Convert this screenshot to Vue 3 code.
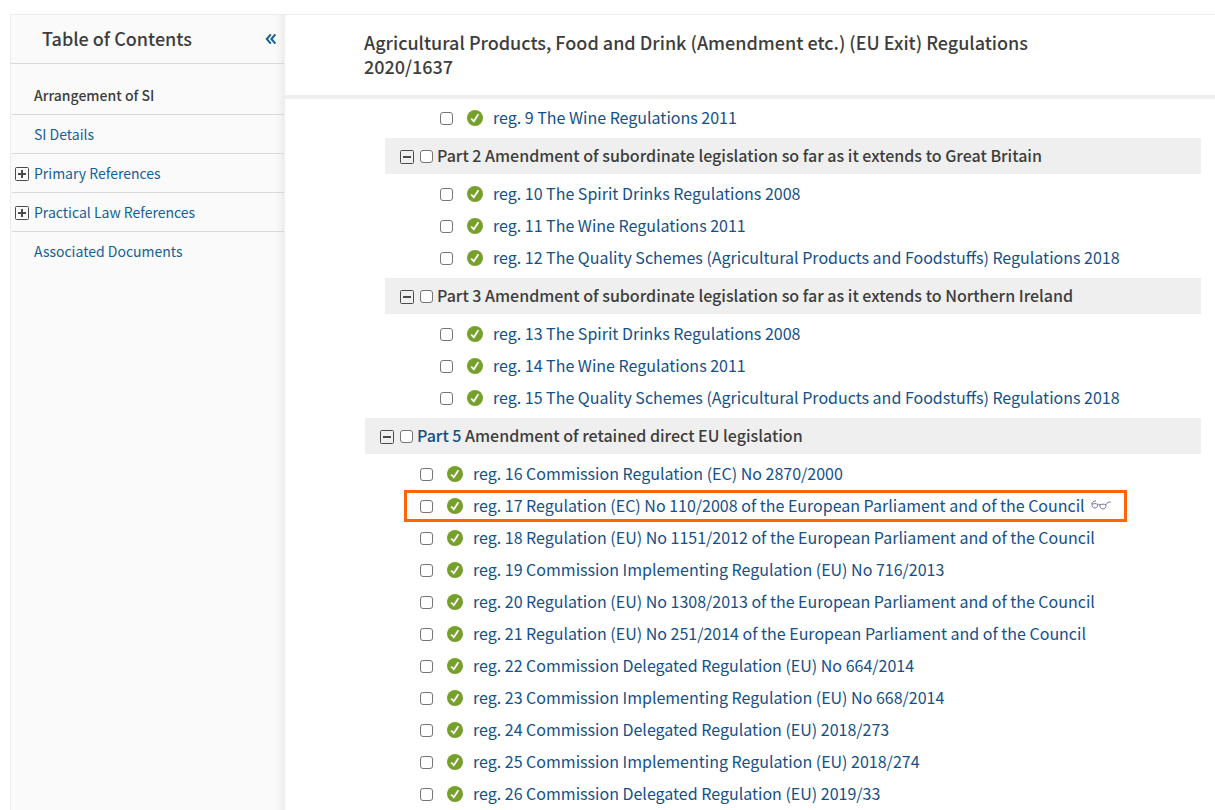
<script setup>
import { ref } from 'vue'

const nav = [
  { label: 'Arrangement of SI', current: true },
  { label: 'SI Details' },
  { label: 'Primary References', expandable: true },
  { label: 'Practical Law References', expandable: true },
  { label: 'Associated Documents' },
]

const sections = ref([
  {
    id: 'part1',
    nested: true,
    items: ['reg. 9 The Wine Regulations 2011'],
  },
  {
    id: 'part2',
    nested: true,
    part: 'Part 2',
    title: 'Amendment of subordinate legislation so far as it extends to Great Britain',
    items: [
      'reg. 10 The Spirit Drinks Regulations 2008',
      'reg. 11 The Wine Regulations 2011',
      'reg. 12 The Quality Schemes (Agricultural Products and Foodstuffs) Regulations 2018',
    ],
  },
  {
    id: 'part3',
    nested: true,
    part: 'Part 3',
    title: 'Amendment of subordinate legislation so far as it extends to Northern Ireland',
    items: [
      'reg. 13 The Spirit Drinks Regulations 2008',
      'reg. 14 The Wine Regulations 2011',
      'reg. 15 The Quality Schemes (Agricultural Products and Foodstuffs) Regulations 2018',
    ],
  },
  {
    id: 'part5',
    part: 'Part 5',
    linked: true,
    title: 'Amendment of retained direct EU legislation',
    viewed: 1,
    items: [
      'reg. 16 Commission Regulation (EC) No 2870/2000',
      'reg. 17 Regulation (EC) No 110/2008 of the European Parliament and of the Council',
      'reg. 18 Regulation (EU) No 1151/2012 of the European Parliament and of the Council',
      'reg. 19 Commission Implementing Regulation (EU) No 716/2013',
      'reg. 20 Regulation (EU) No 1308/2013 of the European Parliament and of the Council',
      'reg. 21 Regulation (EU) No 251/2014 of the European Parliament and of the Council',
      'reg. 22 Commission Delegated Regulation (EU) No 664/2014',
      'reg. 23 Commission Implementing Regulation (EU) No 668/2014',
      'reg. 24 Commission Delegated Regulation (EU) 2018/273',
      'reg. 25 Commission Implementing Regulation (EU) 2018/274',
      'reg. 26 Commission Delegated Regulation (EU) 2019/33',
    ],
  },
])
</script>

<template>
  <div class="page">
    <aside class="sidebar">
      <div class="sidebar-head">
        <h2>Table of Contents</h2>
        <button type="button" class="collapse" aria-label="Collapse table of contents">
          <svg width="12" height="12" viewBox="0 0 12 12" fill="none" stroke="currentColor" stroke-width="2">
            <path d="M5.8 1.4 1.800 6l4 4.600M10.400 1.400 6.400 6l4 4.600" />
          </svg>
        </button>
      </div>
      <ul class="nav">
        <li v-for="entry in nav" :key="entry.label">
          <button v-if="entry.expandable" type="button" class="toggle" :aria-label="`Expand ${entry.label}`">
            <svg width="14" height="14" viewBox="0 0 14 14" fill="none" stroke="currentColor">
              <rect x=".5" y=".5" width="13" height="13" rx="1" />
              <path d="M3 7h8M7 3v8" stroke-width="2" />
            </svg>
          </button>
          <span v-else class="toggle"></span>
          <strong v-if="entry.current">{{ entry.label }}</strong>
          <a v-else href="#">{{ entry.label }}</a>
        </li>
      </ul>
    </aside>

    <main class="content">
      <header class="title">
        <h1>Agricultural Products, Food and Drink (Amendment etc.) (EU Exit) Regulations 2020/1637</h1>
      </header>
      <div class="tree">
        <section v-for="section in sections" :key="section.id" :class="{ nested: section.nested }">
          <div v-if="section.part" class="bar">
            <button type="button" class="toggle" :aria-label="`Collapse ${section.part}`">
              <svg width="14" height="14" viewBox="0 0 14 14" fill="none" stroke="currentColor">
                <rect x=".5" y=".5" width="13" height="13" rx="1" />
                <path d="M3 7h8" stroke-width="2" />
              </svg>
            </button>
            <input :id="section.id" type="checkbox" />
            <label :for="section.id">
              <a v-if="section.linked" href="#">{{ section.part }}</a>
              <template v-else>{{ section.part }}</template>
              {{ section.title }}
            </label>
          </div>
          <ul class="regs">
            <li v-for="(item, i) in section.items" :key="item" :class="{ highlighted: section.viewed === i }">
              <input type="checkbox" :aria-label="item" />
              <svg class="status" width="16" height="16" viewBox="0 0 16 16" fill="none">
                <circle cx="8" cy="8" r="8" fill="#76a02b" />
                <path d="m4.2 8.5 2.6 2.8 4.6-7" stroke="#fff" stroke-width="1.8" />
              </svg>
              <a href="#">{{ item }}</a>
              <svg v-if="section.viewed === i" class="glasses" width="20" height="10" viewBox="0 0 20 10" fill="none" stroke="#73739b">
                <path d="M5 .8C2.500 1 .5 2.500.8 4M1 4.200c1.600-.8 4.200-.8 5.600.2.4 2-.6 3.600-2.600 3.600S.8 6.300 1 4.200ZM6.600 4.800c.8-.8 1.600-.8 2.200 0M8.800 4.800c1.800-.8 4.600-.8 6.200 0 .2 2.400-1 4.200-3 4.200s-3.400-2-3.200-4.200ZM15 4.600c1-1.800 2.400-2.800 4.600-2.600" />
              </svg>
            </li>
          </ul>
        </section>
      </div>
    </main>
  </div>
</template>

<style>
html,
body {
  background: #fff;
}
body {
  margin: 0;
}
</style>

<style scoped>
.page {
  box-sizing: border-box;
  display: flex;
  height: 100vh;
  padding: 14px 0 0 10px;
  overflow: hidden;
  color: #3d3d3d;
  font-family: "Source Sans Pro", "Noto Sans CJK SC", sans-serif;
}
h1,
h2,
ul {
  margin: 0;
  padding: 0;
}
li {
  list-style: none;
}
a {
  color: #145087;
  text-decoration: none;
}
button {
  padding: 0;
  border: 0;
  background: none;
  cursor: pointer;
}
.sidebar {
  box-sizing: border-box;
  flex: 0 0 275px;
  border-top: 1px solid #ececec;
  border-left: 1px solid #ececec;
  background: linear-gradient(to left, #ededed, #fafafa 10px);
}
.sidebar-head {
  display: flex;
  align-items: center;
  justify-content: space-between;
  height: 48px;
  margin-right: 1px;
  padding: 0 7px 0 31px;
  border-bottom: 1px solid #d8d8d8;
}
h2 {
  padding-bottom: 2px;
  font-size: 18px;
  font-weight: 500;
  line-height: 24px;
}
.collapse {
  display: flex;
  color: #145f9b;
}
.nav {
  padding: 12px 1px 0;
}
.nav li {
  display: flex;
  align-items: center;
  gap: 5px;
  height: 38px;
  padding-left: 3px;
  border-bottom: 1px solid #d8d8d8;
  font-size: 14px;
}
.nav li:last-child {
  border-bottom: 0;
}
.nav a {
  color: #145f9b;
}
.nav strong {
  font-weight: 500;
}
.toggle {
  display: flex;
  flex: 0 0 14px;
  padding-top: 2px;
  color: #4a4a4a;
}
.content {
  flex: 1;
  min-width: 0;
  border-top: 1px solid #ececec;
}
.title {
  padding: 15px 160px 17px 79px;
  border-bottom: 4px solid #efefef;
}
h1 {
  min-height: 48px;
  font-size: 18px;
  font-weight: 500;
  line-height: 24px;
}
.tree {
  padding: 3px 14px 0 80px;
}
.nested {
  padding-left: 20px;
}
.bar {
  display: flex;
  align-items: center;
  height: 36px;
  margin: 4px 0;
  padding-left: 15px;
  background: #efefef;
  font-size: 16px;
  font-weight: 500;
}
.bar label,
.regs a {
  padding-bottom: 2px;
}
input {
  box-sizing: border-box;
  flex: 0 0 13px;
  height: 13px;
  margin: 0;
  border: 1px solid #767676;
  border-radius: 3px;
  background: #fff;
  appearance: none;
}
input:checked {
  background: #145f9b;
}
.bar input {
  margin: 0 4px 0 6px;
}
.regs li {
  box-sizing: border-box;
  display: flex;
  align-items: center;
  width: max-content;
  height: 32px;
  margin-left: 39px;
  padding: 0 13px;
  border: 3px solid transparent;
  font-size: 16px;
}
.regs .highlighted {
  border-color: #f60;
}
.status {
  margin: 0 10px 0 14px;
}
.glasses {
  margin: 0 0 2px 6px;
}
</style>
